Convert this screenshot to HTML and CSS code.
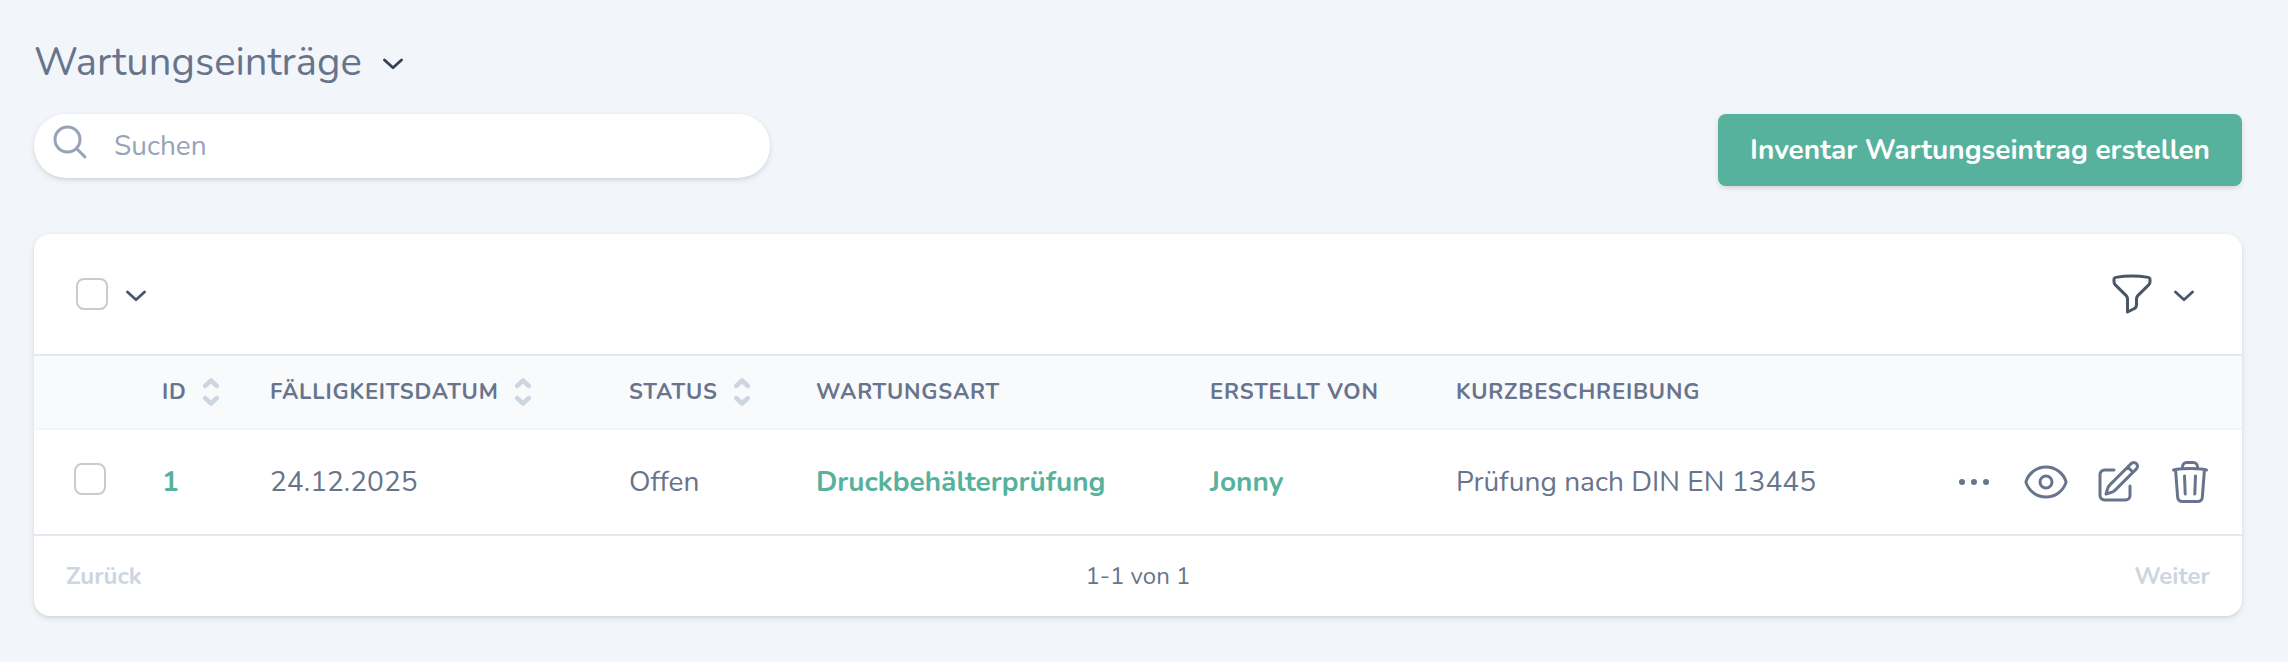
FILE: index.html
```
<!DOCTYPE html>
<html lang="de">
<head>
    <meta charset="UTF-8">
    <meta name="viewport" content="width=device-width, initial-scale=1.0">
    <title>Wartungseinträge</title>
    <link rel="stylesheet" href="styles.css">
</head>
<body>
    <svg class="sprite">
        <symbol id="chevron" viewBox="0 0 10 6"><path d="M.75 1L5 4.9 9.25 1"/></symbol>
        <symbol id="sort" viewBox="0 0 16 28"><path d="M2.3 7.9L8 2.5l5.7 5.4M2.3 20.1L8 25.5l5.7-5.4"/></symbol>
    </svg>
    <main class="page">
        <h1 class="title">Wartungseinträge <svg class="chevron"><use href="#chevron"/></svg></h1>

        <div class="actions">
            <label class="search">
                <svg class="search-icon" viewBox="0 0 24 24"><path d="M21 21l-5.197-5.197m0 0A7.5 7.5 0 105.196 5.196a7.5 7.5 0 0010.607 10.607z"/></svg>
                <input type="search" class="search-input" placeholder="Suchen">
            </label>
            <button class="create">Inventar Wartungseintrag erstellen</button>
        </div>

        <div class="card">
            <div class="toolbar">
                <div class="select-all">
                    <input type="checkbox" class="checkbox">
                    <svg class="chevron"><use href="#chevron"/></svg>
                </div>
                <div class="filter">
                    <svg class="icon" viewBox="0 0 24 24"><path d="M12 3c2.755 0 5.455.232 8.083.678.533.09.917.556.917 1.096v1.044a2.25 2.25 0 01-.659 1.591l-5.432 5.432a2.25 2.25 0 00-.659 1.591v2.927a2.25 2.25 0 01-1.244 2.013L9.75 21v-6.568a2.25 2.25 0 00-.659-1.591L3.659 7.409A2.25 2.25 0 013 5.818V4.774c0-.54.384-1.006.917-1.096A48.32 48.32 0 0112 3z"/></svg>
                    <svg class="chevron"><use href="#chevron"/></svg>
                </div>
            </div>

            <table class="table">
                <colgroup>
                    <col class="col-check">
                    <col class="col-id">
                    <col class="col-date">
                    <col class="col-status">
                    <col class="col-type">
                    <col class="col-author">
                    <col>
                    <col class="col-controls">
                </colgroup>
                <thead>
                    <tr>
                        <th></th>
                        <th><div class="sortable">ID <svg class="sort"><use href="#sort"/></svg></div></th>
                        <th><div class="sortable">Fälligkeitsdatum <svg class="sort"><use href="#sort"/></svg></div></th>
                        <th><div class="sortable">Status <svg class="sort"><use href="#sort"/></svg></div></th>
                        <th>Wartungsart</th>
                        <th>Erstellt von</th>
                        <th>Kurzbeschreibung</th>
                        <th></th>
                    </tr>
                </thead>
                <tbody>
                    <tr>
                        <td class="check-cell"><input type="checkbox" class="checkbox"></td>
                        <td><a class="link">1</a></td>
                        <td>24.12.2025</td>
                        <td>Offen</td>
                        <td><a class="link">Druckbehälterprüfung</a></td>
                        <td><a class="link">Jonny</a></td>
                        <td>Prüfung nach DIN EN 13445</td>
                        <td>
                            <div class="controls">
                                <svg class="icon" viewBox="0 0 24 24"><path d="M6.75 12a.75.75 0 11-1.5 0 .75.75 0 011.5 0zM12.75 12a.75.75 0 11-1.5 0 .75.75 0 011.5 0zM18.75 12a.75.75 0 11-1.5 0 .75.75 0 011.5 0z"/></svg>
                                <svg class="icon" viewBox="0 0 24 24"><path d="M2.036 12.322a1.012 1.012 0 010-.639C3.423 7.51 7.36 4.5 12 4.5c4.638 0 8.573 3.007 9.963 7.178.07.207.07.431 0 .639C20.577 16.49 16.64 19.5 12 19.5c-4.638 0-8.573-3.007-9.963-7.178z"/><path d="M15 12a3 3 0 11-6 0 3 3 0 016 0z"/></svg>
                                <svg class="icon" viewBox="0 0 24 24"><path d="M16.862 4.487l1.687-1.688a1.875 1.875 0 112.652 2.652L10.582 16.07a4.5 4.5 0 01-1.897 1.13L6 18l.8-2.685a4.5 4.5 0 011.13-1.897l8.932-8.931zm0 0L19.5 7.125M18 14v4.75A2.25 2.25 0 0115.75 21H5.25A2.25 2.25 0 013 18.75V8.25A2.25 2.25 0 015.25 6H10"/></svg>
                                <svg class="icon" viewBox="0 0 24 24"><path d="M14.74 9l-.346 9m-4.788 0L9.26 9m9.968-3.21c.342.052.682.107 1.022.166m-1.022-.165L18.16 19.673a2.25 2.25 0 01-2.244 2.077H8.084a2.25 2.25 0 01-2.244-2.077L4.772 5.79m14.456 0a48.108 48.108 0 00-3.478-.397m-12 .562c.34-.059.68-.114 1.022-.165m0 0a48.11 48.11 0 013.478-.397m7.5 0v-.916c0-1.18-.91-2.164-2.09-2.201a51.964 51.964 0 00-3.32 0c-1.18.037-2.09 1.022-2.09 2.201v.916m7.5 0a48.667 48.667 0 00-7.5 0"/></svg>
                            </div>
                        </td>
                    </tr>
                </tbody>
            </table>

            <div class="pagination">
                <span class="page-link">Zurück</span>
                <span>1-1 von 1</span>
                <span class="page-link">Weiter</span>
            </div>
        </div>
    </main>
</body>
</html>
```
FILE: styles.css
```
* {
    box-sizing: border-box;
}

body {
    min-height: 100vh;
    margin: 0;
    background: #f2f5fa;
    color: #67748c;
    font-family: Nunito, Lato, "Open Sans", sans-serif;
    font-size: 28px;
}

svg {
    fill: none;
    stroke: currentColor;
    stroke-width: 1.5;
    stroke-linecap: round;
    stroke-linejoin: round;
    flex-shrink: 0;
}

.sprite {
    display: none;
}

.page {
    padding: 34px 46px 0 34px;
}

.title {
    display: flex;
    align-items: center;
    gap: 21px;
    height: 56px;
    margin: 0 0 24px;
    font-size: 40px;
    font-weight: 400;
}

.title .chevron {
    margin-top: 3px;
    color: #364154;
}

.chevron {
    width: 20px;
    height: 12px;
    color: #4a5568;
    stroke-width: 1.4;
}

.actions {
    display: flex;
    justify-content: space-between;
    align-items: flex-start;
    height: 120px;
}

.search {
    display: flex;
    width: 736px;
    height: 64px;
    padding: 0 16px;
    border-radius: 32px;
    background: #fff;
    box-shadow: 0 2px 6px rgba(0, 0, 0, 0.1), 0 2px 4px -2px rgba(0, 0, 0, 0.1);
}

.search-icon {
    width: 40px;
    height: 40px;
    margin-top: 8px;
    color: #97a3b7;
    stroke-width: 1.8;
}

.search-input {
    flex: 1;
    padding: 0 0 0 24px;
    border: 0;
    background: none;
    font: inherit;
}

.search-input::placeholder {
    color: #97a3b7;
}

.create {
    width: 524px;
    height: 72px;
    padding: 0;
    border: 0;
    border-radius: 8px;
    background: #56b29c;
    color: #fff;
    font: inherit;
    font-weight: 700;
    white-space: nowrap;
    box-shadow: 0 2px 6px rgba(0, 0, 0, 0.1), 0 2px 4px -2px rgba(0, 0, 0, 0.1);
}

.card {
    border-radius: 16px;
    background: #fff;
    box-shadow: 0 2px 6px rgba(0, 0, 0, 0.1), 0 2px 4px -2px rgba(0, 0, 0, 0.1);
}

.toolbar {
    display: flex;
    justify-content: space-between;
    align-items: center;
    height: 120px;
    padding: 0 48px 0 42px;
}

.select-all {
    display: flex;
    align-items: center;
    gap: 18px;
}

.filter {
    display: flex;
    align-items: center;
    gap: 18px;
    color: #4a5568;
}

.toolbar .chevron {
    margin-top: 3px;
}

.checkbox {
    appearance: none;
    display: block;
    width: 32px;
    height: 32px;
    margin: 0;
    border: 2px solid #cacad0;
    border-radius: 8px;
    background: #fff;
}

.icon {
    width: 48px;
    height: 48px;
}

.table {
    width: 100%;
    table-layout: fixed;
    border-collapse: separate;
    border-spacing: 0;
}

.col-check { width: 128px; }
.col-id { width: 108px; }
.col-date { width: 359px; }
.col-status { width: 187px; }
.col-type { width: 394px; }
.col-author { width: 246px; }
.col-controls { width: 292px; }

th,
td {
    padding: 0;
    text-align: left;
    white-space: nowrap;
}

th {
    height: 76px;
    border-top: 2px solid #e3e8ef;
    border-bottom: 2px solid #f2f5f9;
    background: #f8fafc;
    font-size: 22px;
    font-weight: 700;
    letter-spacing: 0.8px;
    text-transform: uppercase;
}

.sortable {
    display: flex;
    align-items: center;
    gap: 16px;
}

.sort {
    width: 16px;
    height: 28px;
    color: #cdd5e0;
    stroke-width: 4.6;
}

td {
    height: 104px;
    letter-spacing: 0.05px;
}

.check-cell {
    padding: 0 0 6px 40px;
}

.link {
    color: #56b29c;
    font-weight: 700;
    letter-spacing: 0;
}

.controls {
    display: flex;
    justify-content: flex-end;
    gap: 24px;
    padding-right: 28px;
}

.pagination {
    display: flex;
    justify-content: space-between;
    align-items: center;
    height: 82px;
    padding: 0 32px;
    border-top: 2px solid #e3e8ef;
    font-size: 24px;
}

.page-link {
    color: #cdd5e0;
    font-weight: 700;
}
```
